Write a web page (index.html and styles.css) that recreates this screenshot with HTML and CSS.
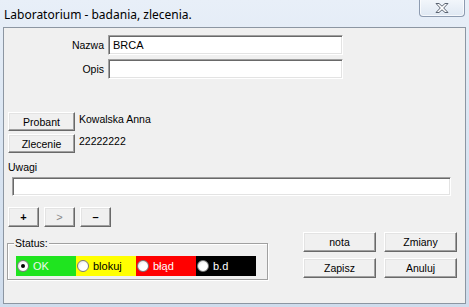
FILE: index.html
```html
<!DOCTYPE html>
<html lang="pl">
<head>
    <meta charset="UTF-8">
    <title>Laboratorium - badania, zlecenia.</title>
    <link rel="stylesheet" href="styles.css">
</head>
<body>
    <div class="window">
        <div class="title-bar">
            <span class="title">Laboratorium - badania, zlecenia.</span>
            <button class="close-btn" title="Zamknij">
                <svg width="14" height="12" viewBox="0 0 14 12">
                    <path d="M1 1.5 L4 1.5 L7 4.2 L10 1.5 L13 1.5 L8.7 6 L13 10.5 L10 10.5 L7 7.8 L4 10.5 L1 10.5 L5.3 6 Z" fill="#fff" stroke="#5b6472" stroke-width="1" stroke-linejoin="round"/>
                </svg>
            </button>
        </div>

        <div class="client">
            <div class="field-row">
                <label class="field-label">Nazwa</label>
                <div class="input">BRCA</div>
            </div>
            <div class="field-row second">
                <label class="field-label">Opis</label>
                <div class="input"></div>
            </div>

            <div class="person-row first">
                <button class="btn btn-person">Probant</button>
                <span class="person-info">Kowalska Anna</span>
            </div>
            <div class="person-row">
                <button class="btn btn-person">Zlecenie</button>
                <span class="person-info">22222222</span>
            </div>

            <div class="notes-label">Uwagi</div>
            <div class="input notes"></div>

            <div class="nav-buttons">
                <button class="btn btn-nav">+</button>
                <button class="btn btn-nav dim">&gt;</button>
                <button class="btn btn-nav">&ndash;</button>
            </div>

            <div class="bottom-row">
                <div class="group">
                    <span class="group-label">Status:</span>
                    <div class="status-strip">
                        <div class="status ok"><span class="radio checked"></span>OK</div>
                        <div class="status block"><span class="radio"></span>blokuj</div>
                        <div class="status error"><span class="radio"></span>błąd</div>
                        <div class="status none"><span class="radio"></span>b.d</div>
                    </div>
                </div>
                <div class="action-buttons">
                    <button class="btn btn-action">nota</button>
                    <button class="btn btn-action">Zmiany</button>
                    <button class="btn btn-action">Zapisz</button>
                    <button class="btn btn-action">Anuluj</button>
                </div>
            </div>
        </div>
    </div>
</body>
</html>
```

FILE: styles.css
```css
body {
    margin: 0;
    font-family: "Liberation Sans", Arial, sans-serif;
    font-size: 10.5px;
    color: #000;
}
.window {
    width: 469px;
    height: 307px;
    background: linear-gradient(to bottom, #e8eff8 0%, #dbe6f3 40%, #cfdcec 100%);
    overflow: hidden;
}
.title-bar {
    height: 27px;
    display: flex;
    justify-content: space-between;
    align-items: flex-start;
}
.title {
    font-family: "Noto Sans", "Open Sans", sans-serif;
    font-size: 12px;
    padding: 6px 0 0 4px;
    color: #000;
}
.close-btn {
    width: 46px;
    height: 18px;
    margin: -1px 4px 0 0;
    padding: 0;
    border: 1px solid #8d9bb0;
    border-top: none;
    border-radius: 0 0 4px 4px;
    background: linear-gradient(to bottom, #f3f7fb, #dfe8f3);
    box-shadow: inset 0 0 0 1px rgba(255,255,255,0.7);
    display: flex;
    align-items: center;
    justify-content: center;
}
.client {
    margin: 0 3px;
    height: 275px;
    border: 1px solid #8c96a2;
    background-color: #f0f0f0;
    padding: 0 0 0 4px;
}
.field-row {
    display: flex;
    align-items: center;
    height: 20px;
    margin-top: 7px;
}
.field-row.second {
    margin-top: 4px;
}
.field-label {
    width: 96px;
    margin-right: 4px;
    text-align: right;
}
.input {
    box-sizing: border-box;
    width: 235px;
    height: 20px;
    background: #fff;
    border: 1px solid;
    border-color: #a0a0a0 #fff #fff #a0a0a0;
    box-shadow: inset 1px 1px 0 #696969, inset -1px -1px 0 #e3e3e3;
    padding: 3px 0 0 4px;
    font-size: 11px;
}
.btn {
    box-sizing: border-box;
    font-family: "Liberation Sans", Arial, sans-serif;
    font-size: 10.5px;
    line-height: 12px;
    color: #000;
    background-color: #f0f0f0;
    border: 1px solid;
    border-color: #fff #696969 #696969 #fff;
    box-shadow: inset -1px -1px 0 #a0a0a0, inset 1px 1px 0 #e3e3e3;
    padding: 0;
    margin: 0;
}
.person-row {
    display: flex;
    align-items: flex-start;
    margin-top: 3px;
}
.person-row.first {
    margin-top: 33px;
}
.btn-person {
    width: 67px;
    height: 19px;
}
.person-info {
    margin-left: 4px;
    padding-top: 1px;
}
.notes-label {
    margin-top: 8px;
    line-height: 13px;
}
.input.notes {
    width: 439px;
    height: 19px;
    margin: 3px 0 0 4px;
}
.nav-buttons {
    display: flex;
    gap: 5px;
    margin-top: 11px;
}
.btn-nav {
    width: 31px;
    height: 20px;
    font-weight: bold;
    font-size: 11px;
}
.btn-nav.dim {
    color: #888;
    font-weight: normal;
}
.bottom-row {
    display: flex;
    align-items: flex-start;
    gap: 35px;
    margin-top: 5px;
}
.group {
    position: relative;
    box-sizing: border-box;
    width: 261px;
    height: 37px;
    margin: 11px 0 0 -1px;
    border: 1px solid #a0a0a0;
    box-shadow: inset 1px 1px 0 #fff, 1px 1px 0 #fff;
    padding: 12px 0 0 8px;
}
.group-label {
    position: absolute;
    top: -7px;
    left: 6px;
    padding: 0 1px;
    background-color: #f0f0f0;
    line-height: 13px;
}
.status-strip {
    display: flex;
    height: 20px;
}
.status {
    width: 60px;
    display: flex;
    align-items: center;
    gap: 4px;
    padding-left: 1px;
    box-sizing: border-box;
    font-size: 11px;
}
.status.ok {
    background-color: #1fe41f;
    color: #eef8ee;
}
.status.block {
    background-color: #ffff00;
    color: #000;
}
.status.error {
    background-color: #ff0000;
    color: #fff;
}
.status.none {
    background-color: #000;
    color: #fff;
}
.radio {
    box-sizing: border-box;
    width: 12px;
    height: 12px;
    border-radius: 50%;
    border: 1px solid #7a7a7a;
    background: radial-gradient(circle at 60% 60%, #fff 40%, #dcdcdc 100%);
    position: relative;
}
.radio.checked::after {
    content: "";
    position: absolute;
    left: 3px;
    top: 3px;
    width: 4px;
    height: 4px;
    border-radius: 50%;
    background-color: #000;
}
.action-buttons {
    display: grid;
    grid-template-columns: 73px 73px;
    grid-auto-rows: 20px;
    column-gap: 8px;
    row-gap: 6px;
}
.btn-action {
    width: 73px;
    height: 20px;
}
```
